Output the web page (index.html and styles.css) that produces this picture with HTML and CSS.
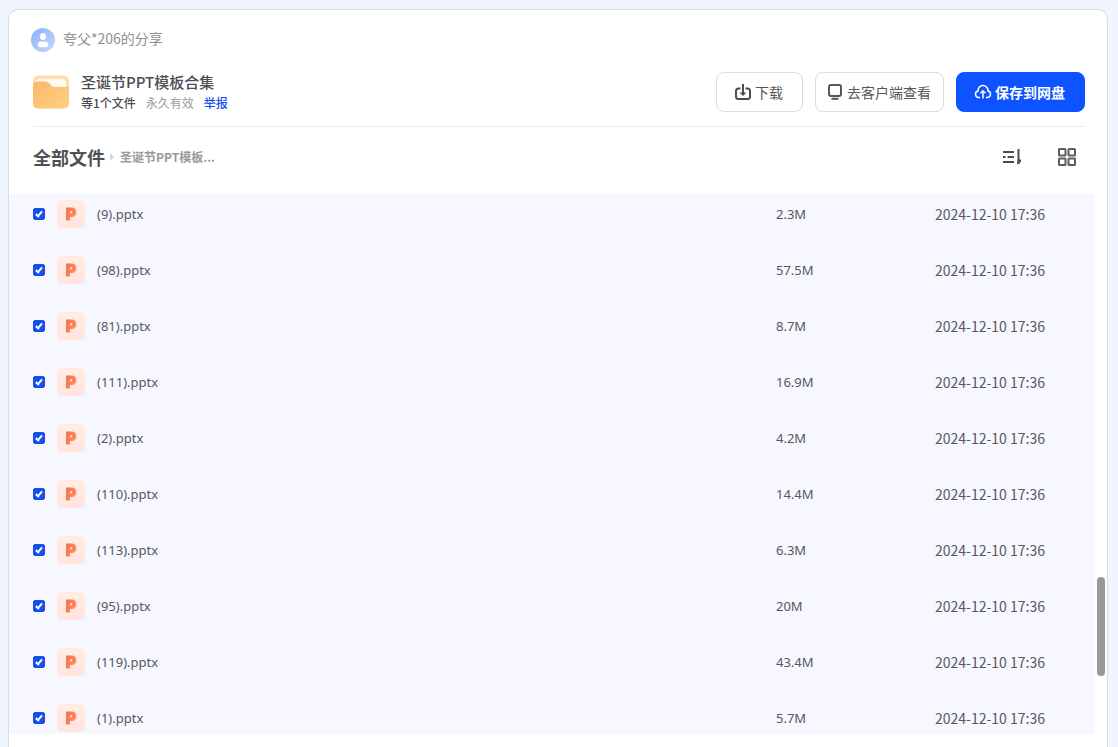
FILE: index.html
```html
<!DOCTYPE html>
<html lang="zh-CN">
<head>
<meta charset="utf-8">
<meta name="viewport" content="width=device-width, initial-scale=1">
<title>圣诞节PPT模板合集</title>
<link rel="stylesheet" href="styles.css">
</head>
<body>
<main class="panel">
  <header class="head">
    <div class="sharer">
      <svg class="avatar" width="24" height="24" viewBox="0 0 24 24" aria-hidden="true">
        <defs><linearGradient id="av" x1="0" y1="0" x2="1" y2="1"><stop offset="0" stop-color="#86b4fb"/><stop offset="1" stop-color="#c9d6fd"/></linearGradient></defs>
        <circle cx="12" cy="12" r="12" fill="url(#av)"/>
        <ellipse cx="12" cy="8.5" rx="3" ry="3.5" fill="#fff"/>
        <rect x="6.8" y="13.5" width="10.4" height="5.8" rx="2.9" fill="#fff"/>
      </svg>
      <span>夸父*206的分享</span>
    </div>
    <div class="share">
      <svg class="folder" width="36" height="34" viewBox="0 0 36 34" aria-hidden="true">
        <defs><linearGradient id="fo" x1="0" y1="0" x2="1" y2="1"><stop offset="0" stop-color="#fbb767"/><stop offset="1" stop-color="#ffd083"/></linearGradient></defs>
        <rect width="36" height="33" y=".5" rx="6" fill="#fddcae"/>
        <path d="M3 6Q3 4 6 4H29Q33 4 33 8V15H3Z" fill="#fff9f0"/>
        <path d="M0 11Q0 6.5 5 6.5H12Q15 6.5 17 9L18 10.5Q19.300 12 21.500 12H36V28Q36 33.500 30.500 33.500H5.500Q0 33.500 0 28Z" fill="url(#fo)"/>
      </svg>
      <div class="share-text">
        <h1 class="title">圣诞节PPT模板合集</h1>
        <p class="meta"><span class="count">等1个文件</span><span class="valid">永久有效</span><a class="report" href="#report">举报</a></p>
      </div>
      <div class="actions">
        <button class="btn btn-download" type="button">
          <svg width="18" height="18" viewBox="0 0 18 18" fill="none" stroke="#4a4c50" stroke-width="2" aria-hidden="true"><path d="M6.500 5.500H4.500Q2 5.500 2 8V13.500Q2 16 4.500 16H13.500Q16 16 16 13.500V8Q16 5.500 13.500 5.500H11.500M9 1V11"/><path d="M5.500 9.500H12.500L9 13Z" fill="#4a4c50" stroke="none"/></svg>
          下载
        </button>
        <button class="btn btn-client" type="button">
          <svg width="18" height="18" viewBox="0 0 18 18" fill="none" stroke="#55575b" stroke-width="2" aria-hidden="true"><rect x="3" y="2" width="12" height="11" rx="2"/><path d="M5.500 15.800H12.500"/></svg>
          去客户端查看
        </button>
        <button class="btn btn-primary" type="button">
          <svg width="18" height="18" viewBox="0 0 18 18" fill="none" stroke="#fff" stroke-width="1.500" aria-hidden="true"><path d="M6 14.500H5A3.300 3.300 0 0 1 4 8A5 5.500 0 0 1 14 8A3.300 3.300 0 0 1 13 14.500H12M9 15.500V8M6.500 10.200L9 7.700L11.500 10.200"/></svg>
          保存到网盘
        </button>
      </div>
    </div>
  </header>
  <div class="toolbar">
    <nav class="crumbs" aria-label="路径">
      <a class="root" href="#all">全部文件</a>
      <span class="arrow"></span>
      <a class="current" href="#folder">圣诞节PPT模板...</a>
    </nav>
    <div class="views">
      <button class="icon-btn" type="button" aria-label="排序">
        <svg width="20" height="20" viewBox="0 0 20 20" fill="none" stroke="#4a4c50" stroke-width="2" aria-hidden="true"><path d="M1 5H12M1 10H3.500M5.500 10H12M1 15H12M16.500 2V17"/><path d="M15.500 18V12.500H19V14.500Z" fill="#4a4c50" stroke="none"/></svg>
      </button>
      <button class="icon-btn" type="button" aria-label="网格视图">
        <svg width="20" height="20" viewBox="0 0 20 20" fill="none" stroke="#5c5d60" stroke-width="2" aria-hidden="true"><rect x="2" y="2" width="6.500" height="6.500" rx=".6"/><rect x="11.500" y="2" width="6.500" height="6.500" rx=".6"/><rect x="2" y="11.500" width="6.500" height="6.500" rx=".6"/><rect x="11.500" y="11.500" width="6.500" height="6.500" rx=".6"/></svg>
      </button>
    </div>
  </div>
  <div class="body">
    <div class="list">
      <table class="files">
        <colgroup><col><col class="col-size"><col class="col-date"></colgroup>
        <tbody>
          <tr><td><label class="file"><input class="check" type="checkbox" checked><span class="ppt" aria-hidden="true"><b>P</b></span>(9).pptx</label></td><td>2.3M</td><td class="date">2024-12-10 17:36</td></tr>
          <tr><td><label class="file"><input class="check" type="checkbox" checked><span class="ppt" aria-hidden="true"><b>P</b></span>(98).pptx</label></td><td>57.5M</td><td class="date">2024-12-10 17:36</td></tr>
          <tr><td><label class="file"><input class="check" type="checkbox" checked><span class="ppt" aria-hidden="true"><b>P</b></span>(81).pptx</label></td><td>8.7M</td><td class="date">2024-12-10 17:36</td></tr>
          <tr><td><label class="file"><input class="check" type="checkbox" checked><span class="ppt" aria-hidden="true"><b>P</b></span>(111).pptx</label></td><td>16.9M</td><td class="date">2024-12-10 17:36</td></tr>
          <tr><td><label class="file"><input class="check" type="checkbox" checked><span class="ppt" aria-hidden="true"><b>P</b></span>(2).pptx</label></td><td>4.2M</td><td class="date">2024-12-10 17:36</td></tr>
          <tr><td><label class="file"><input class="check" type="checkbox" checked><span class="ppt" aria-hidden="true"><b>P</b></span>(110).pptx</label></td><td>14.4M</td><td class="date">2024-12-10 17:36</td></tr>
          <tr><td><label class="file"><input class="check" type="checkbox" checked><span class="ppt" aria-hidden="true"><b>P</b></span>(113).pptx</label></td><td>6.3M</td><td class="date">2024-12-10 17:36</td></tr>
          <tr><td><label class="file"><input class="check" type="checkbox" checked><span class="ppt" aria-hidden="true"><b>P</b></span>(95).pptx</label></td><td>20M</td><td class="date">2024-12-10 17:36</td></tr>
          <tr><td><label class="file"><input class="check" type="checkbox" checked><span class="ppt" aria-hidden="true"><b>P</b></span>(119).pptx</label></td><td>43.4M</td><td class="date">2024-12-10 17:36</td></tr>
          <tr><td><label class="file"><input class="check" type="checkbox" checked><span class="ppt" aria-hidden="true"><b>P</b></span>(1).pptx</label></td><td>5.7M</td><td class="date">2024-12-10 17:36</td></tr>
        </tbody>
      </table>
    </div>
    <div class="track"><div class="thumb"></div></div>
  </div>
</main>
</body>
</html>
```
FILE: styles.css
```css
*, *::after { box-sizing: border-box; }

body {
  margin: 0;
  height: 100vh;
  padding: 9px 10px 0 8px;
  background: #f1f5ff;
  color: #55585e;
  font: 14px/20px "Noto Sans CJK SC", sans-serif;
  overflow: hidden;
}

a { color: inherit; text-decoration: none; }
button { font: inherit; color: inherit; cursor: pointer; }
svg { display: block; flex: none; }

.panel {
  display: flex;
  flex-direction: column;
  height: 100%;
  padding-bottom: 13px;
  background: #fff;
  border: 1px solid #d9dbe3;
  border-bottom: 0;
  border-radius: 10px 10px 0 0;
}

.head {
  margin: 0 22px 0 24px;
  padding: 18px 0 13px;
  border-bottom: 1px solid #ebebed;
}

.sharer {
  display: flex;
  align-items: flex-start;
  gap: 8px;
  margin-left: -2px;
  color: #8f9092;
}

.share {
  display: flex;
  align-items: center;
  gap: 12px;
  margin-top: 19px;
}

.share-text { flex: 1; }

.title {
  margin: 0;
  font-size: 15px;
  line-height: 22px;
  font-weight: 500;
  color: #4a4d53;
}

.meta {
  display: flex;
  gap: 10px;
  margin: 0;
  font-size: 12px;
  line-height: 20px;
}

.count { color: #4a4d53; font-weight: 500; }
.valid { color: #9a9a9c; }
.report { color: #1450ee; font-weight: 500; }

.actions { display: flex; gap: 12px; }

.btn {
  display: flex;
  align-items: center;
  justify-content: center;
  gap: 3px;
  height: 40px;
  padding: 0 17px;
  border: 1px solid #dcdcde;
  border-radius: 8px;
  background: #fff;
  white-space: nowrap;
}

.btn-download { padding: 0 19px 0 17px; }
.btn-client { padding: 0 12px 0 10px; }

.btn-primary {
  padding: 0 19px 0 17px;
  border-color: #0d53ff;
  background: #0d53ff;
  color: #fff;
  font-weight: 700;
}

.toolbar {
  display: flex;
  align-items: center;
  justify-content: space-between;
  height: 67px;
  padding: 0 30px 8px 24px;
  flex: none;
}

.crumbs { display: flex; align-items: center; }
.root { font-size: 18px; font-weight: 700; color: #4d5056; }

.arrow {
  margin: 0 6px 0 5px;
  border: 4px solid transparent;
  border-left-color: #d5d5d8;
  border-right: 0;
}

.current { font-size: 12px; font-weight: 700; color: #98999c; }
.views { display: flex; gap: 35px; }

.icon-btn {
  padding: 0;
  border: 0;
  background: none;
}

.body { display: flex; flex: 1; min-height: 0; }

.list {
  display: flex;
  align-items: flex-start;
  flex: 1;
  overflow: hidden;
  background: #f7f7ff;
}

/* The list is scrolled so that the first row is partly cut. */
.files {
  width: 100%;
  margin-top: -8px;
  border-collapse: collapse;
  table-layout: fixed;
  font-family: "Noto Sans", "Noto Sans CJK SC", sans-serif;
  font-size: 13px;
}

.col-size { width: 159px; }
.col-date { width: 160px; }
.files td { height: 56px; padding: 0; }

.files .date {
  font-family: "Noto Sans CJK SC", sans-serif;
  font-size: 14px;
}

.file {
  display: flex;
  align-items: center;
  padding-left: 24px;
}

.check {
  position: relative;
  appearance: none;
  width: 12px;
  height: 12px;
  margin: 0 12px 0 0;
  border-radius: 2px;
  background: #fff;
  border: 1px solid #c4c7d0;
}

.check:checked { background: #1450ee; border-color: #1450ee; }

.check:checked::after {
  content: "";
  position: absolute;
  left: 3px;
  top: 1px;
  width: 4px;
  height: 7px;
  border: solid #fff;
  border-width: 0 2px 2px 0;
  transform: rotate(40deg);
}

.ppt {
  display: flex;
  align-items: center;
  justify-content: center;
  width: 28px;
  height: 28px;
  margin-right: 12px;
  border-radius: 5px;
  background: linear-gradient(#ffeee6, #ffe4dc);
}

.ppt b {
  padding: 0 1px;
  font: 900 16px/20px Inter, sans-serif;
  color: transparent;
  -webkit-text-stroke: 1px transparent;
  background: linear-gradient(120deg, #f5693a, #ff9677);
  background-clip: text;
}

.track {
  position: relative;
  width: 12px;
}

.thumb {
  position: absolute;
  top: 71%;
  left: 2px;
  width: 8px;
  height: 99px;
  border-radius: 4px;
  background: #999;
}
```
